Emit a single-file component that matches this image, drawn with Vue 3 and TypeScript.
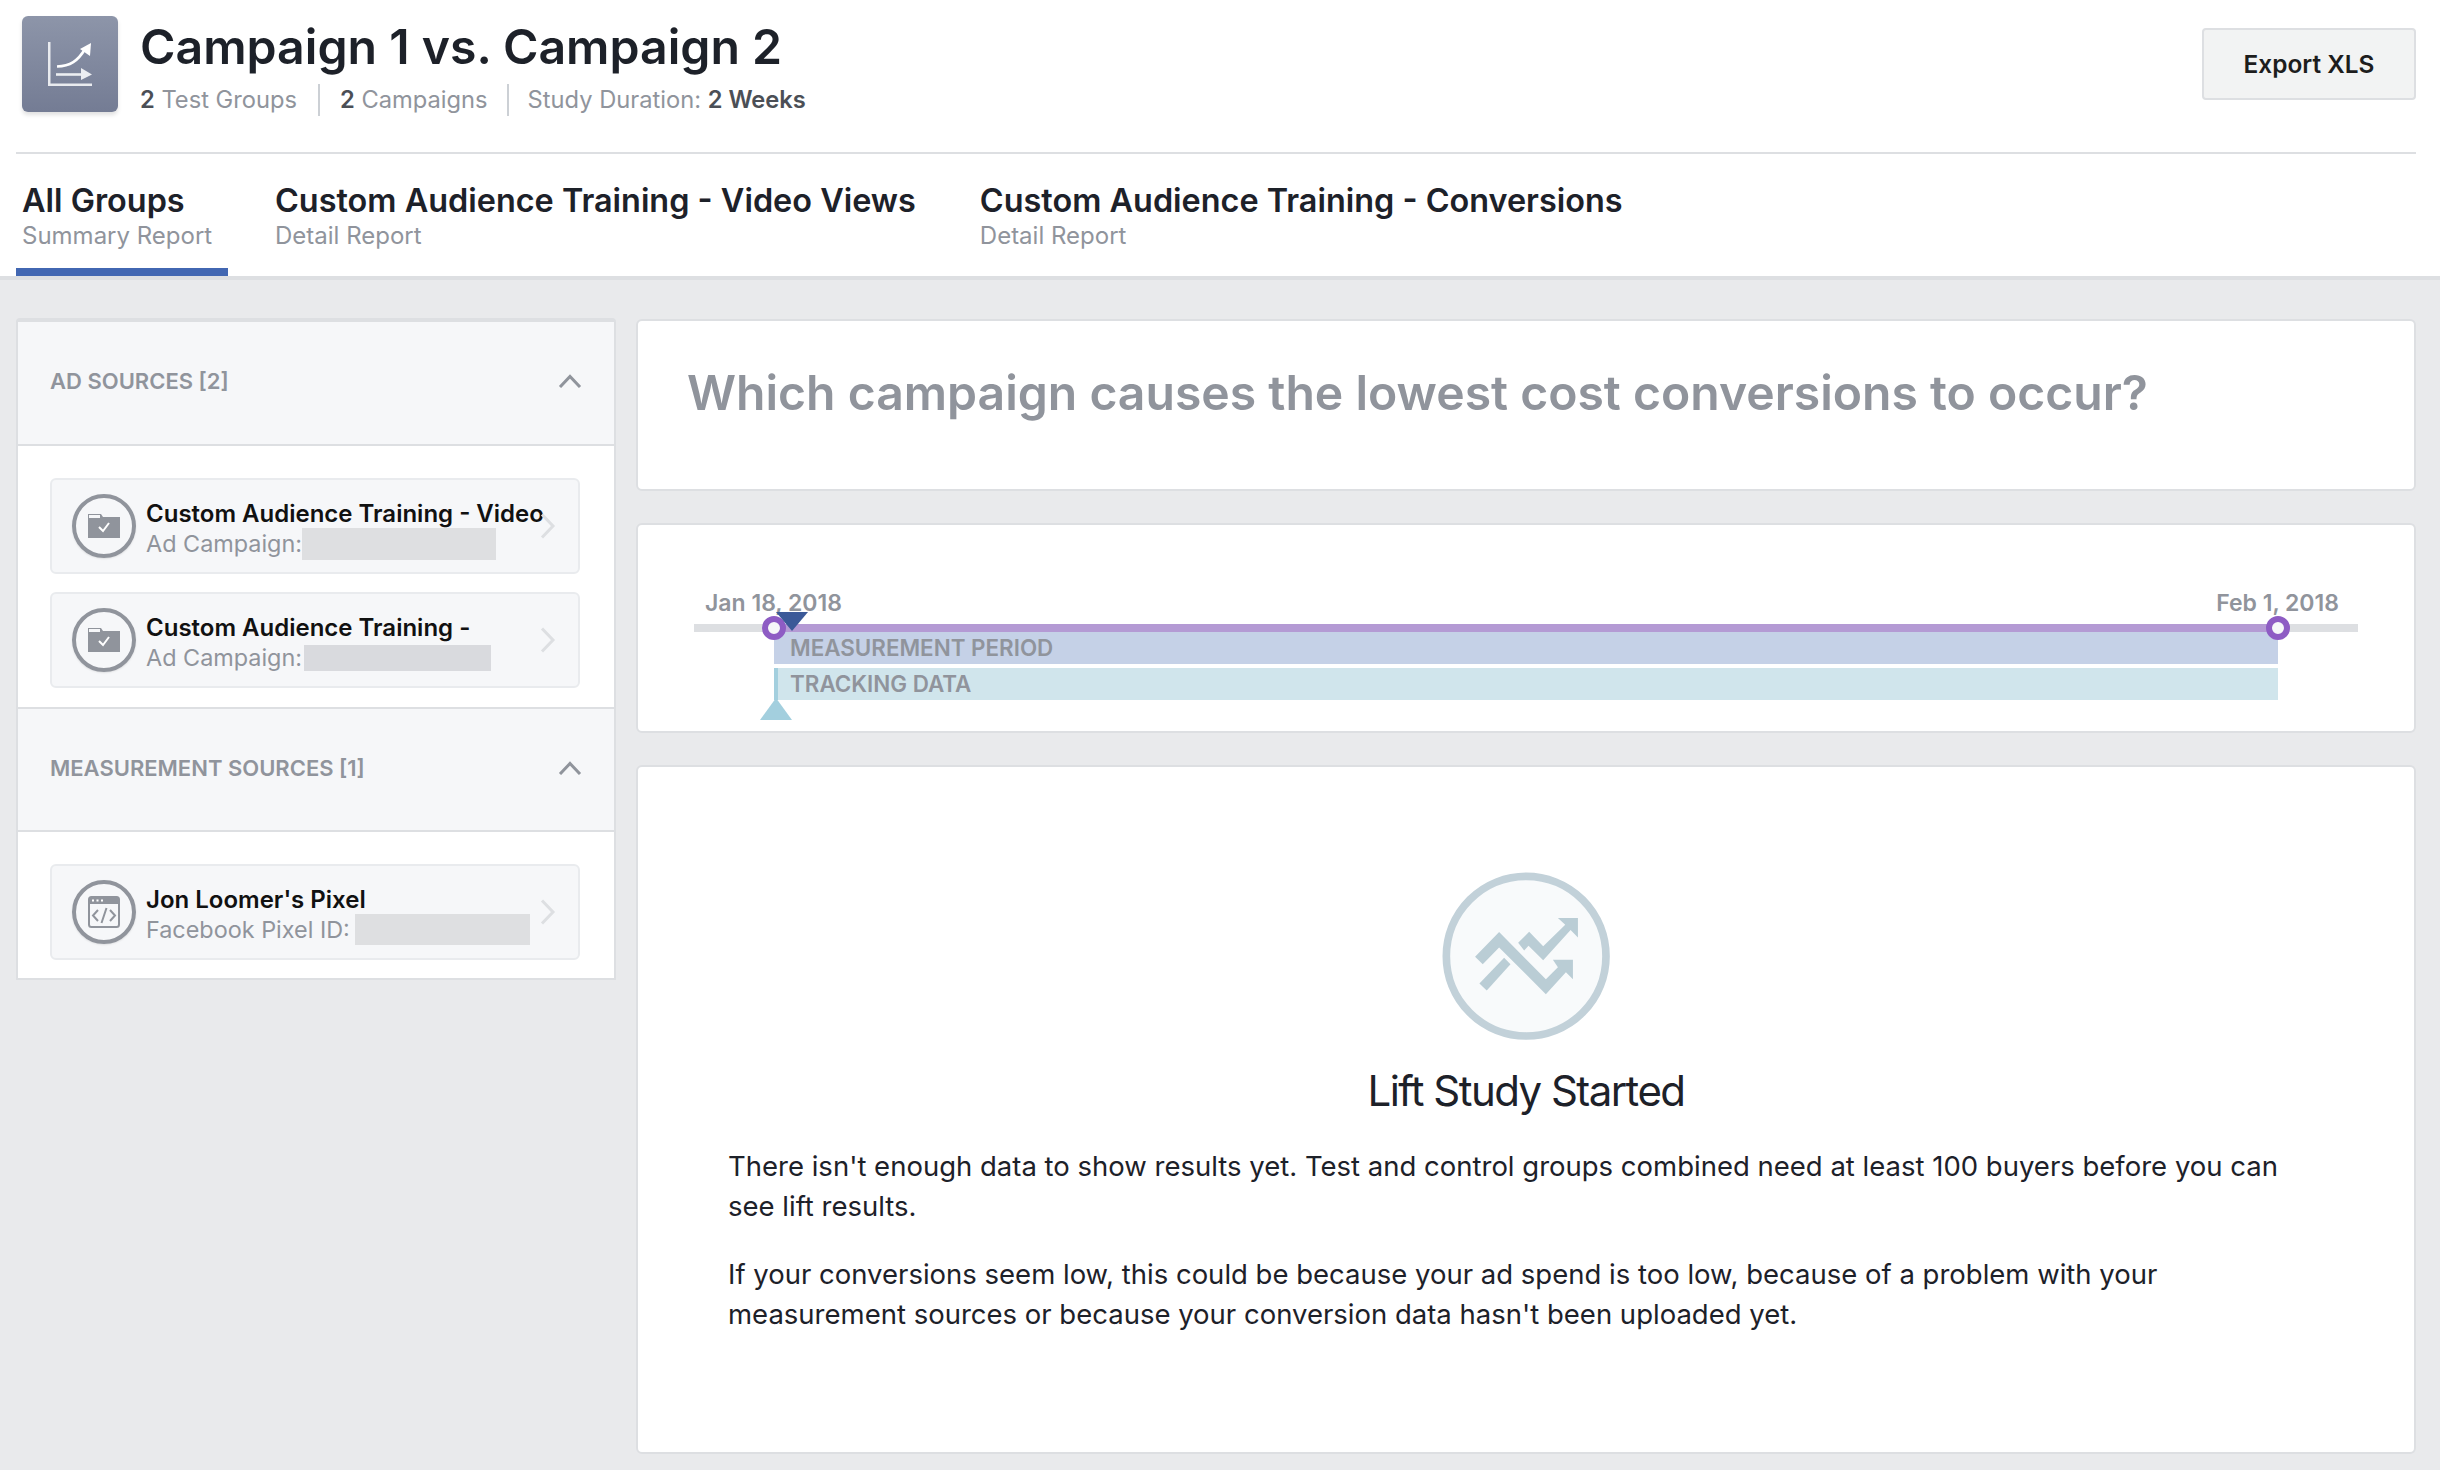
<script setup lang="ts">
interface SourceItem { title: string; label: string; redactW: number; redactH: number; redactC: string; icon: 'folder' | 'code'; gap: number }
const adSources: SourceItem[] = [
  { title: 'Custom Audience Training - Video', label: 'Ad Campaign:', redactW: 194, redactH: 32, redactC: '#dedfe1', icon: 'folder', gap: 0 },
  { title: 'Custom Audience Training -', label: 'Ad Campaign:', redactW: 187, redactH: 26, redactC: '#d9dade', icon: 'folder', gap: 2 }
]
const measureSources: SourceItem[] = [
  { title: "Jon Loomer's Pixel", label: 'Facebook Pixel ID:', redactW: 175, redactH: 31, redactC: '#dedfe1', icon: 'code', gap: 5 }
]
const sections = [
  { name: 'AD SOURCES [2]', items: adSources },
  { name: 'MEASUREMENT SOURCES [1]', items: measureSources }
]
const tabs = [
  { title: 'All Groups', sub: 'Summary Report', active: true },
  { title: 'Custom Audience Training - Video Views', sub: 'Detail Report', active: false },
  { title: 'Custom Audience Training - Conversions', sub: 'Detail Report', active: false }
]
</script>

<template>
  <div class="page">
    <header class="top">
      <div class="head">
        <div class="logo">
          <svg width="96" height="96" viewBox="0 0 96 96" fill="none">
            <path d="M26 26V70H70V67.500H28.500V26Z" fill="#e9ebef" />
            <path d="M35 50.500C48 50 56 45 63 33" stroke="#fff" stroke-width="2.600" />
            <path d="M58 33L69 27L68 40Z" fill="#fff" />
            <path d="M34 58.500H60" stroke="#eceef2" stroke-width="2.600" />
            <path d="M59 52L70 58.500L59 64Z" fill="#eceef2" />
          </svg>
        </div>
        <div class="head-text">
          <h1>Campaign 1 vs. Campaign 2</h1>
          <div class="meta">
            <span><b>2</b> Test Groups</span>
            <span><b>2</b> Campaigns</span>
            <span>Study Duration: <b>2 Weeks</b></span>
          </div>
        </div>
        <button class="export">Export XLS</button>
      </div>
      <nav class="tabs">
        <div v-for="t in tabs" :key="t.title" class="tab" :class="{ active: t.active }">
          <div class="tab-title">{{ t.title }}</div>
          <div class="tab-sub">{{ t.sub }}</div>
        </div>
      </nav>
    </header>

    <main class="body">
      <aside class="side">
        <section v-for="s in sections" :key="s.name" class="sec">
          <div class="sec-head">
            <span>{{ s.name }}</span>
            <svg width="24" height="14" viewBox="0 0 24 14" fill="none">
              <path d="M2 13L12 2.500L22 13" stroke="#90949c" stroke-width="3" />
            </svg>
          </div>
          <div class="sec-list">
            <div v-for="i in s.items" :key="i.title" class="item">
              <div class="round">
                <svg v-if="i.icon === 'folder'" width="32" height="26" viewBox="0 0 32 26">
                  <path d="M0 1H13L15 4H32V25H0Z" fill="#90949c" />
                  <path d="M1 2H12V5H1Z" fill="#f6f7f9" />
                  <path d="M11 14L15 18L21 10" fill="none" stroke="#fff" stroke-width="2" />
                </svg>
                <svg v-else width="32" height="32" viewBox="0 0 32 32" fill="none">
                  <rect x="1" y="1" width="30" height="30" rx="2.500" stroke="#90949c" stroke-width="2" />
                  <path d="M1 3.500A2.500 2.500 0 0 1 3.500 1H28.500A2.500 2.500 0 0 1 31 3.500V8H1Z" fill="#90949c" />
                  <path d="M4 4.500H6M8.500 4.500H10.500M13 4.500H15" stroke="#fff" stroke-width="2" />
                  <path d="M10 14L5 19.500L10 25M22 14L27 19.500L22 25M18.500 12L13.500 27" stroke="#90949c" stroke-width="2" />
                </svg>
              </div>
              <div class="item-text">
                <div class="item-title">{{ i.title }}</div>
                <div class="item-sub">
                  <span>{{ i.label }}</span>
                  <span class="redact" :style="{ width: i.redactW + 'px', height: i.redactH + 'px', background: i.redactC, marginLeft: i.gap + 'px' }"></span>
                </div>
              </div>
              <svg class="chev" width="16" height="26" viewBox="0 0 16 26" fill="none">
                <path d="M2 1.500L13 13L2 24.500" stroke="#dddfe2" stroke-width="3" />
              </svg>
            </div>
          </div>
        </section>
      </aside>

      <div class="content">
        <div class="card question">Which campaign causes the lowest cost conversions to occur?</div>

        <div class="card timeline">
          <div class="dates"><span>Jan 18, 2018</span><span>Feb 1, 2018</span></div>
          <div class="track">
            <div class="track-on"></div>
            <i class="knob knob-l"></i>
            <i class="knob knob-r"></i>
            <i class="tri-down"></i>
          </div>
          <div class="bars">
            <div class="bar bar-m">MEASUREMENT PERIOD</div>
            <div class="bar bar-t">TRACKING DATA</div>
            <i class="tri-up"></i>
          </div>
        </div>

        <div class="card result">
          <svg width="168" height="168" viewBox="186 96 503 503" class="big">
            <circle cx="438" cy="348" r="239" fill="#f8fafb" stroke="#c2d1d9" stroke-width="23" />
            <g fill="#bacdd5">
              <path d="M285 350L357 276L497 417L533 381L518 359H578V417L557 396L497 462L357 322L308 372Z" />
              <path d="M298 430L372 353L391 372L320 451Z" />
              <path d="M414 308L447 275L489 318L555 254L533 234H593V292L571 270L489 360L445 317L432 331Z" />
            </g>
          </svg>
          <h2>Lift Study Started</h2>
          <p>There isn't enough data to show results yet. Test and control groups combined need at least 100 buyers before you can see lift results.</p>
          <p>If your conversions seem low, this could be because your ad spend is too low, because of a problem with your measurement sources or because your conversion data hasn't been uploaded yet.</p>
        </div>
      </div>
    </main>
  </div>
</template>

<style>
html, body { margin: 0; background: #e9eaec; }
</style>

<style scoped>
.page { width: 2440px; min-height: 1470px; background: #e9eaec; font-family: Inter, "Liberation Sans", sans-serif; color: #1d2129; }
.top { background: #fff; padding: 0 24px 0 16px; height: 276px; border-bottom: 4px solid #dddfe2; }
.head { display: flex; height: 154px; box-sizing: border-box; border-bottom: 2px solid #dddfe2; align-items: flex-start; }
.logo { width: 96px; height: 96px; margin: 16px 0 0 6px; border-radius: 6px; background: linear-gradient(#8d95a9, #747c94); box-shadow: 0 3px 4px rgba(0,0,0,.12); flex: none; }
.head-text { margin-left: 22px; flex: 1; }
h1 { margin: 16px 0 0; font-size: 48.200px; line-height: 62px; font-weight: 600; color: #1d2129; }
.meta { display: flex; margin-top: 6px; font-size: 23.700px; line-height: 32px; color: #90949c; }
.meta span { padding-right: 21px; margin-right: 20px; border-right: 2px solid #ccd0d5; }
.meta span:nth-child(2) { padding-right: 19px; margin-right: 19px; }
.meta span:last-child { border: 0; }
.meta b { font-weight: 600; color: #4b4f56; }
.export { margin-top: 28px; width: 214px; height: 72px; background: #f2f3f3; border: 2px solid #dddfe2; border-radius: 4px; font: 600 24.400px Inter, sans-serif; color: #1d1d1d; }
.tabs { display: flex; height: 122px; }
.tab { height: 122px; box-sizing: border-box; padding: 27px 16px 0 6px; margin-right: 42px; }
.tab.active { border-bottom: 8px solid #4267b2; padding-right: 17px; margin-right: 41px; width: 212px; }
.tab-title { font-size: 32.400px; line-height: 40px; font-weight: 600; white-space: nowrap; }
.tab-sub { font-size: 24px; line-height: 30px; color: #90949c; white-space: nowrap; }

.body { display: flex; gap: 20px; padding: 38px 24px 16px 16px; align-items: flex-start; }
.side { width: 600px; flex: none; box-sizing: border-box; background: #fff; border: 2px solid #dddfe2; border-top-width: 4px; border-radius: 4px 4px 0 0; }
.sec-head { height: 124px; box-sizing: border-box; padding: 0 32px 4px 32px; display: flex; align-items: center; justify-content: space-between; background: #f6f7f9; border-bottom: 2px solid #dddfe2; font-size: 22px; font-weight: 600; color: #90949c; }
.sec + .sec .sec-head { height: 125px; padding-bottom: 3px; border-top: 2px solid #dddfe2; }
.sec-list { padding: 32px 34px 19px 32px; display: flex; flex-direction: column; gap: 18px; }
.sec + .sec .sec-list { padding-bottom: 18px; }
.item { height: 96px; box-sizing: border-box; display: flex; align-items: center; background: #f6f7f9; border: 2px solid #e9ebee; border-radius: 6px; padding-left: 20px; position: relative; }
.round { width: 64px; height: 64px; box-sizing: border-box; border: 4px solid #90949c; border-radius: 50%; flex: none; display: flex; align-items: center; justify-content: center; box-shadow: 0 1px 2px rgba(0,0,0,.1); }
.item-text { margin-left: 10px; margin-top: 5px; }
.item-title { font-size: 24px; line-height: 30px; font-weight: 600; color: #111; white-space: nowrap; }
.item-sub { font-size: 23.400px; line-height: 30px; color: #90949c; display: flex; align-items: center; white-space: nowrap; height: 30px; }
.redact { display: inline-block; }
.chev { position: absolute; right: 22px; top: 33px; }

.content { flex: 1; min-width: 0; margin-top: 1px; display: flex; flex-direction: column; gap: 32px; }
.card { background: #fff; border: 2px solid #dddfe2; border-radius: 6px; box-sizing: border-box; }
.question { height: 172px; padding: 43px 0 0 49px; font-size: 48.100px; line-height: 58px; font-weight: 600; color: #90949c; white-space: nowrap; }
.timeline { height: 210px; padding: 64px 0 0 56px; }
.dates { width: 1664px; padding: 0 19px 0 11px; box-sizing: border-box; display: flex; justify-content: space-between; font-size: 23px; line-height: 28px; font-weight: 600; color: #90949c; height: 28px; }
.track { position: relative; z-index: 1; width: 1664px; height: 8px; margin-top: 7px; background: #dddfe2; }
.track-on { position: absolute; left: 80px; width: 1504px; top: 0; height: 8px; background: #b49ad4; }
.knob { position: absolute; top: -8px; width: 24px; height: 24px; box-sizing: border-box; border-radius: 50%; border: 6px solid #8e5cc4; background: #f6f7f9; }
.knob-l { left: 68px; }
.knob-r { left: 1572px; }
.tri-down { position: absolute; left: 82px; top: -12px; width: 0; height: 0; border-left: 16px solid transparent; border-right: 16px solid transparent; border-top: 19px solid #3b5998; }
.bars { position: relative; margin-left: 80px; width: 1504px; display: flex; flex-direction: column; gap: 4px; }
.bar { height: 32px; font-size: 22.400px; line-height: 32px; font-weight: 600; color: #90949c; padding-left: 16px; box-sizing: border-box; }
.bar-m { background: #c5d1e7; }
.bar-t { background: #d0e5ec; border-left: 4px solid #a3cfde; padding-left: 12px; }
.tri-up { position: absolute; left: -14px; top: 66px; width: 0; height: 0; border-left: 16px solid transparent; border-right: 16px solid transparent; border-bottom: 22px solid #a3cfde; }
.result { height: 689px; padding: 105px 88px 0 90px; display: flex; flex-direction: column; align-items: center; }
.big { flex: none; margin-left: -2px; }
h2 { margin: 24px 0 28px; font-size: 42px; line-height: 54px; font-weight: 400; letter-spacing: -1.550px; color: #1d2129; margin-left: -2px; }
p { margin: 0 0 28px; width: 100%; font-size: 27.500px; line-height: 40px; font-weight: 400; color: #1d2129; }
</style>
